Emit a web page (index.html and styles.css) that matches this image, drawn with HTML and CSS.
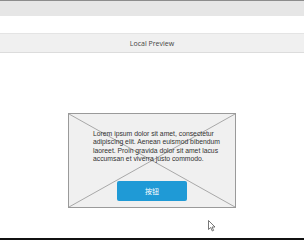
FILE: index.html
```html
<!DOCTYPE html>
<html>
<head>
<meta charset="utf-8">
<link rel="stylesheet" href="styles.css">
</head>
<body>
<div class="app">
  <div class="topbar"></div>
  <div class="addressbar"></div>
  <div class="preview-header">Local Preview</div>
  <div class="canvas">
    <div class="widget">
      <svg class="placeholder" viewBox="0 0 100 100" preserveAspectRatio="none">
        <line x1="0" y1="0" x2="100" y2="100" vector-effect="non-scaling-stroke"/>
        <line x1="100" y1="0" x2="0" y2="100" vector-effect="non-scaling-stroke"/>
      </svg>
      <p class="widget-text">Lorem ipsum dolor sit amet, consectetur adipiscing elit. Aenean euismod bibendum laoreet. Proin gravida dolor sit amet lacus accumsan et viverra justo commodo.</p>
      <button class="widget-btn">按钮</button>
    </div>
    <svg class="cursor" width="8" height="12" viewBox="0 0 8 12">
      <path d="M0.5 0.5 L0.5 9.5 L2.7 7.5 L4.3 11 L5.6 10.4 L4.1 7 L7 7 Z" fill="#fff" stroke="#555" stroke-width="0.8"/>
    </svg>
  </div>
  <div class="bottombar"></div>
</div>
</body>
</html>
```

FILE: styles.css
```css
html, body {
  margin: 0;
  padding: 0;
  background: #fff;
}
.app {
  width: 304px;
  height: 240px;
  display: flex;
  flex-direction: column;
  overflow: hidden;
}
.topbar {
  height: 1px;
  background: #8c8c8c;
  flex: none;
}
.addressbar {
  height: 15px;
  background: #e6e6e6;
  border-bottom: 17px solid #fff;
  flex: none;
}
.preview-header {
  height: 18px;
  background: #f0f0f0;
  border-top: 1px solid #e4e4e4;
  border-bottom: 1px solid #dcdcdc;
  flex: none;
  display: flex;
  align-items: center;
  justify-content: center;
  font-family: "Open Sans", sans-serif;
  font-size: 7px;
  color: #444;
}
.canvas {
  flex: 1;
  position: relative;
  padding: 60px 0 0 68px;
}
.widget {
  position: relative;
  width: 166px;
  height: 93px;
  background: #f0f0f0;
  border: 1px solid #9a9a9a;
  display: flex;
  flex-direction: column;
  align-items: center;
}
.placeholder {
  position: absolute;
  left: 0;
  top: 0;
  width: 100%;
  height: 100%;
}
.placeholder line {
  stroke: #a8a8a8;
  stroke-width: 1;
}
.widget-text {
  position: relative;
  margin: 16px 0 0 12px;
  width: 130px;
  font-family: "Liberation Sans", Arial, sans-serif;
  font-size: 6.8px;
  line-height: 8.4px;
  color: #333;
}
.widget-btn {
  position: relative;
  margin-top: auto;
  margin-bottom: 6px;
  width: 70px;
  height: 20px;
  border: none;
  border-radius: 2px;
  background: #1f9ad6;
  color: #fff;
  font-family: "Noto Sans CJK SC", sans-serif;
  font-size: 7px;
  padding: 0;
}
.cursor {
  position: absolute;
  left: 208px;
  top: 167px;
}
.bottombar {
  height: 2px;
  background: #111;
  flex: none;
}
```
